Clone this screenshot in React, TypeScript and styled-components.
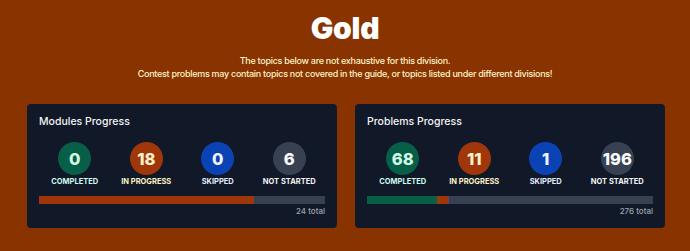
import React from 'react';
import styled, { createGlobalStyle } from 'styled-components';

const GlobalStyle = createGlobalStyle`
  html, body {
    margin: 0;
    padding: 0;
    background: #883300;
    font-family: Inter, "Noto Sans", "Liberation Sans", sans-serif;
  }
`;

const Page = styled.div`
  width: 690px;
  height: 251px;
  background: #883300;
  padding-top: 10px;
  box-sizing: border-box;
`;

const Title = styled.h1`
  margin: 0;
  text-align: center;
  font-size: 30px;
  line-height: 36px;
  font-weight: 900;
  color: #ffffff;
  letter-spacing: -0.3px;
`;

const Description = styled.p`
  margin: 8px 0 0;
  text-align: center;
  font-size: 9px;
  line-height: 13px;
  font-weight: 500;
  letter-spacing: -0.28px;
  color: #fef3c7;
`;

const Cards = styled.div`
  display: grid;
  grid-template-columns: 310px 310px;
  gap: 18px;
  justify-content: center;
  margin-top: 24px;
  padding-left: 2px;
`;

const Card = styled.section`
  background: #111827;
  border-radius: 4px;
  padding: 11px 12px 12px;
`;

const CardTitle = styled.h2`
  margin: 0;
  font-size: 10.5px;
  line-height: 14px;
  font-weight: 500;
  color: #f3f4f6;
`;

const Stats = styled.div`
  display: grid;
  grid-template-columns: repeat(4, 1fr);
  margin-top: 13px;
`;

const Stat = styled.div`
  display: flex;
  flex-direction: column;
  align-items: center;
`;

type Tone = 'green' | 'orange' | 'blue' | 'gray';

const tones: Record<Tone, { bg: string; fg: string; label: string }> = {
  green: { bg: '#065f46', fg: '#d1fae5', label: '#ccfbf1' },
  orange: { bg: '#a0370a', fg: '#fef3c7', label: '#fef3c7' },
  blue: { bg: '#0b43b4', fg: '#eff6ff', label: '#e0ecff' },
  gray: { bg: '#374151', fg: '#f9fafb', label: '#f3f4f6' },
};

const Circle = styled.div<{ $tone: Tone }>`
  width: 33px;
  height: 33px;
  border-radius: 50%;
  background: ${(p) => tones[p.$tone].bg};
  color: ${(p) => tones[p.$tone].fg};
  display: flex;
  align-items: center;
  justify-content: center;
  font-size: 16.5px;
  font-weight: 800;
`;

const StatLabel = styled.div<{ $tone: Tone }>`
  margin-top: 2px;
  font-size: 7.5px;
  line-height: 10px;
  font-weight: 700;
  text-transform: uppercase;
  color: ${(p) => tones[p.$tone].label};
`;

const Bar = styled.div`
  display: flex;
  height: 8px;
  margin-top: 9px;
  background: #374151;
  overflow: hidden;
`;

const Segment = styled.div<{ $tone: Tone }>`
  height: 100%;
  background: ${(p) => tones[p.$tone].bg};
`;

const Total = styled.div`
  margin-top: 2px;
  text-align: right;
  font-size: 8px;
  line-height: 10px;
  font-weight: 500;
  color: #9ca3af;
`;

type Counts = { completed: number; inProgress: number; skipped: number; notStarted: number };

const ProgressCard = ({ title, counts }: { title: string; counts: Counts }) => {
  const total = counts.completed + counts.inProgress + counts.skipped + counts.notStarted;
  const items: { tone: Tone; value: number; label: string }[] = [
    { tone: 'green', value: counts.completed, label: 'Completed' },
    { tone: 'orange', value: counts.inProgress, label: 'In Progress' },
    { tone: 'blue', value: counts.skipped, label: 'Skipped' },
    { tone: 'gray', value: counts.notStarted, label: 'Not Started' },
  ];

  return (
    <Card>
      <CardTitle>{title}</CardTitle>
      <Stats>
        {items.map((item) => (
          <Stat key={item.label}>
            <Circle $tone={item.tone}>{item.value}</Circle>
            <StatLabel $tone={item.tone}>{item.label}</StatLabel>
          </Stat>
        ))}
      </Stats>
      <Bar>
        {items.slice(0, 3).map((item) => (
          <Segment
            key={item.label}
            $tone={item.tone}
            style={{ width: `${(item.value / total) * 100}%` }}
          />
        ))}
      </Bar>
      <Total>{total} total</Total>
    </Card>
  );
};

export default function App() {
  return (
    <Page>
      <GlobalStyle />
      <Title>Gold</Title>
      <Description>
        The topics below are not exhaustive for this division.
        <br />
        Contest problems may contain topics not covered in the guide, or topics listed under
        different divisions!
      </Description>
      <Cards>
        <ProgressCard
          title="Modules Progress"
          counts={{ completed: 0, inProgress: 18, skipped: 0, notStarted: 6 }}
        />
        <ProgressCard
          title="Problems Progress"
          counts={{ completed: 68, inProgress: 11, skipped: 1, notStarted: 196 }}
        />
      </Cards>
    </Page>
  );
}
